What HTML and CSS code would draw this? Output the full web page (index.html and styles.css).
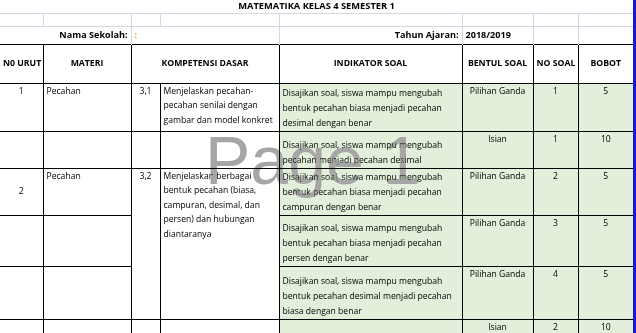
FILE: index.html
```html
<html>
<head>
	<meta charset="utf-8">
	<link rel="stylesheet" href="styles.css">
</head>
<body>
<div class="sheet">
	<div class="page">
		<table class="grid">
			<colgroup>
				<col class="w-no"><col class="w-materi"><col class="w-kd"><col class="w-kdtext">
				<col class="w-ind"><col class="w-bentuk"><col class="w-nosoal"><col class="w-bobot">
			</colgroup>
			<tr class="r-title">
				<td colspan="8" class="title">MATEMATIKA KELAS 4 SEMESTER 1</td>
			</tr>
			<tr class="r-blank">
				<td class="gl"></td><td class="gl"></td><td class="gl"></td><td class="gl"></td>
				<td class="gl"></td><td class="gl"></td><td class="gl"></td><td class="gl last"></td>
			</tr>
			<tr class="r-info">
				<td colspan="2" class="gl label">Nama Sekolah:</td>
				<td colspan="2" class="gl colon">:</td>
				<td class="gl label">Tahun Ajaran:</td>
				<td class="gl value">2018/2019</td>
				<td class="gl"></td>
				<td class="gl last"></td>
			</tr>
			<tr class="r-head">
				<th class="first">N0 URUT</th>
				<th>MATERI</th>
				<th colspan="2">KOMPETENSI DASAR</th>
				<th>INDIKATOR SOAL</th>
				<th>BENTUL SOAL</th>
				<th>NO SOAL</th>
				<th class="last">BOBOT</th>
			</tr>
			<tr class="r1">
				<td class="first c">1</td>
				<td>Pecahan</td>
				<td class="c">3,1</td>
				<td>Menjelaskan pecahan-<br>pecahan senilai dengan<br>gambar dan model konkret</td>
				<td class="ind">Disajikan soal, siswa mampu mengubah<br>bentuk pecahan biasa menjadi pecahan<br>desimal dengan benar</td>
				<td class="g c">Pilihan Ganda</td>
				<td class="g c">1</td>
				<td class="g c last">5</td>
			</tr>
			<tr class="r2">
				<td class="first"></td>
				<td></td>
				<td></td>
				<td></td>
				<td class="ind">Disajikan soal, siswa mampu mengubah<br>pecahan menjadi pecahan desimal</td>
				<td class="g c">Isian</td>
				<td class="g c">1</td>
				<td class="g c last">10</td>
			</tr>
			<tr class="r3">
				<td class="first c mid">2</td>
				<td>Pecahan</td>
				<td class="c" rowspan="3">3,2</td>
				<td rowspan="3">Menjelaskan berbagai<br>bentuk pecahan (biasa,<br>campuran, desimal, dan<br>persen) dan hubungan<br>diantaranya</td>
				<td class="ind">Disajikan soal, siswa mampu mengubah<br>bentuk pecahan biasa menjadi pecahan<br>campuran dengan benar</td>
				<td class="g c">Pilihan Ganda</td>
				<td class="g c">2</td>
				<td class="g c last">5</td>
			</tr>
			<tr class="r4">
				<td class="first"></td>
				<td></td>
				<td class="ind">Disajikan soal, siswa mampu mengubah<br>bentuk pecahan biasa menjadi pecahan<br>persen dengan benar</td>
				<td class="g c">Pilihan Ganda</td>
				<td class="g c">3</td>
				<td class="g c last">5</td>
			</tr>
			<tr class="r5">
				<td class="first"></td>
				<td></td>
				<td class="ind">Disajikan soal, siswa mampu mengubah<br>bentuk pecahan desimal menjadi pecahan<br>biasa dengan benar</td>
				<td class="g c">Pilihan Ganda</td>
				<td class="g c">4</td>
				<td class="g c last">5</td>
			</tr>
			<tr class="r6">
				<td class="first"></td>
				<td></td>
				<td></td>
				<td></td>
				<td class="ind"></td>
				<td class="g c">Isian</td>
				<td class="g c">2</td>
				<td class="g c last">10</td>
			</tr>
		</table>
		<div class="watermark">Page 1</div>
	</div>
	<div class="pagebreak"></div>
</div>
</body>
</html>
```

FILE: styles.css
```css
body {
	margin: 0;
	background: #fff;
	overflow: hidden;
	font-family: "Open Sans", Lato, sans-serif;
	color: #000;
}

.sheet {
	display: flex;
	height: 333px;
	overflow: hidden;
}

.page {
	position: relative;
	width: 633px;
	overflow: hidden;
}

.pagebreak {
	width: 3px;
	background: #1616d6;
}

/* spreadsheet grid */
.grid {
	border-collapse: collapse;
	table-layout: fixed;
	width: 633px;
	font-size: 8.6px;
	line-height: 14.5px;
}
.w-no { width: 43px; }
.w-materi { width: 88px; }
.w-kd { width: 29px; }
.w-kdtext { width: 119px; }
.w-ind { width: 183px; }
.w-bentuk { width: 71px; }
.w-nosoal { width: 45px; }
.w-bobot { width: 55px; }

.grid td,
.grid th {
	padding: 0 3px;
	white-space: nowrap;
	overflow: hidden;
	vertical-align: top;
	border: 1px solid #000;
}
.grid .first { border-left: none; }
.grid .last { border-right: none; }

/* top rows, light gridlines only */
.r-title { height: 13px; }
.r-blank { height: 13px; }
.r-info { height: 18px; }

.grid .title {
	border: none;
	border-bottom: 1px solid #d0d7e5;
	text-align: center;
	vertical-align: middle;
	font-size: 9.3px;
	font-weight: bold;
	line-height: 12px;
}
.grid .gl {
	border: none;
	border-right: 1px solid #d0d7e5;
	border-bottom: 1px solid #d0d7e5;
	vertical-align: middle;
	font-size: 9.1px;
}
.r-info .gl { border-bottom: none; }
.grid .gl.last { border-right: none; }
.grid .label {
	text-align: right;
	font-weight: bold;
}
.grid .value { font-weight: bold; }
.grid .colon { color: #e09a28; font-weight: bold; }

/* header */
.r-head { height: 39px; }
.grid th {
	font-size: 8.7px;
	font-weight: bold;
	text-align: center;
	vertical-align: middle;
}

/* data rows */
.r1 { height: 48px; }
.r2 { height: 37px; }
.r3 { height: 47px; }
.r4 { height: 51px; }
.r5 { height: 53px; }
.r6 { height: 20px; }

.grid .c { text-align: center; }
.grid .mid { vertical-align: middle; }
.grid .g { background: #e2efda; }
.grid .ind {
	background: #e2efda;
	vertical-align: bottom;
	line-height: 14.7px;
}

.watermark {
	position: absolute;
	left: 205px;
	top: 126px;
	font-family: "Liberation Sans", Arial, sans-serif;
	font-size: 68px;
	line-height: 68px;
	color: #a6a6a6;
	mix-blend-mode: darken;
	pointer-events: none;
	white-space: nowrap;
}
```
